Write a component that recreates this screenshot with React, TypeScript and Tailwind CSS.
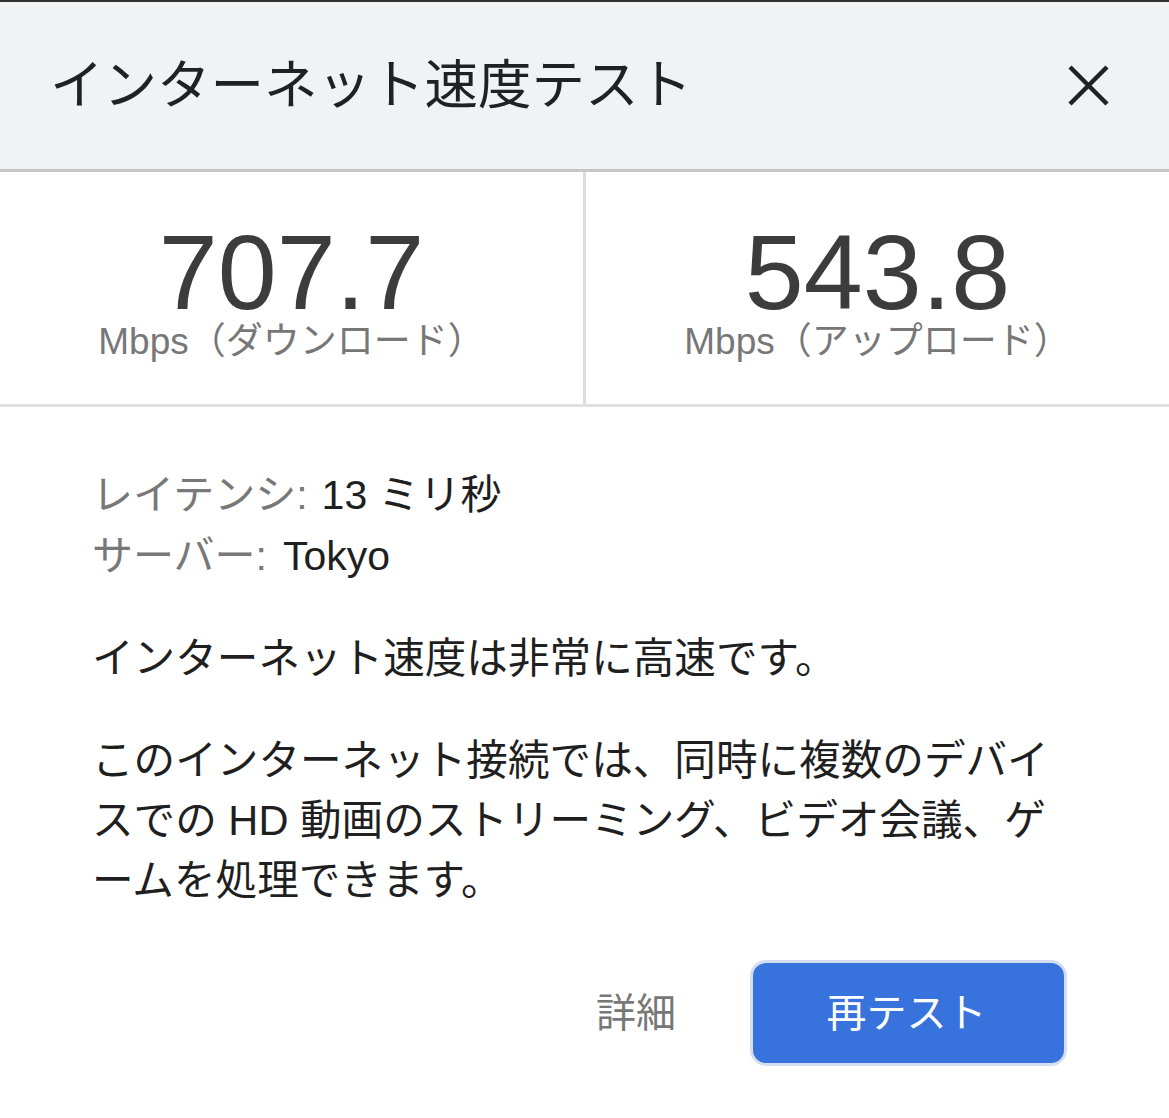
export default function App() {
  return (
    <div className="min-h-[1118px] bg-white font-['Liberation_Sans','Noto_Sans_CJK_JP',sans-serif] text-[#202124]">
      <div className="h-[2px] bg-[#303030]" />

      <div className="h-[167px] bg-[#f1f2f4] flex items-center justify-between pl-[50px] pr-[60px]">
        <h1 className="text-[53.5px] leading-none text-[#202124]">インターネット速度テスト</h1>
        <svg width="41" height="41" viewBox="0 0 41 41" fill="none">
          <path d="M2 2L39 39M39 2L2 39" stroke="#202124" strokeWidth="4.5" />
        </svg>
      </div>
      <div className="h-[3px] bg-[#c6c6c6]" />

      <div className="h-[232px] flex">
        <div className="w-[583px] flex flex-col items-center justify-center pt-[8px]">
          <div className="text-[106px] leading-[96px] text-[#3c3c3c]">707.7</div>
          <div className="mt-[3px] text-[37px] leading-[38px] text-[#777777]">Mbps（ダウンロード）</div>
        </div>
        <div className="w-[3px] bg-[#dcdcdc]" />
        <div className="flex-1 flex flex-col items-center justify-center pt-[8px]">
          <div className="text-[106px] leading-[96px] text-[#3c3c3c]">543.8</div>
          <div className="mt-[3px] text-[37px] leading-[38px] text-[#777777]">Mbps（アップロード）</div>
        </div>
      </div>
      <div className="h-[3px] bg-[#e0e0e0]" />

      <div className="pl-[92px] pt-[58px]">
        <div className="text-[41px] leading-[61px]">
          <div>
            <span className="text-[#787878]">レイテンシ:</span>
            <span className="ml-[14px] text-[#1f1f1f]">13 ミリ秒</span>
          </div>
          <div>
            <span className="text-[#787878]">サーバー:</span>
            <span className="ml-[16px] text-[#1f1f1f]">Tokyo</span>
          </div>
        </div>

        <p className="mt-[42px] text-[41.6px] leading-[60px] text-[#1f1f1f]">
          インターネット速度は非常に高速です。
        </p>

        <p className="mt-[42px] text-[41.6px] leading-[60px] text-[#1f1f1f]">
          このインターネット接続では、同時に複数のデバイ
          <br />
          スでの HD 動画のストリーミング、ビデオ会議、ゲ
          <br />
          ームを処理できます。
        </p>
      </div>

      <div className="mt-[49px] flex items-center justify-end gap-[74px] pr-[102px]">
        <span className="text-[40px] leading-none text-[#777777]">詳細</span>
        <button className="h-[106px] w-[317px] rounded-[16px] border-[3px] border-[#d3def0] bg-[#3873dd] pr-[4px] text-[40px] leading-none text-white">
          再テスト
        </button>
      </div>
    </div>
  );
}
